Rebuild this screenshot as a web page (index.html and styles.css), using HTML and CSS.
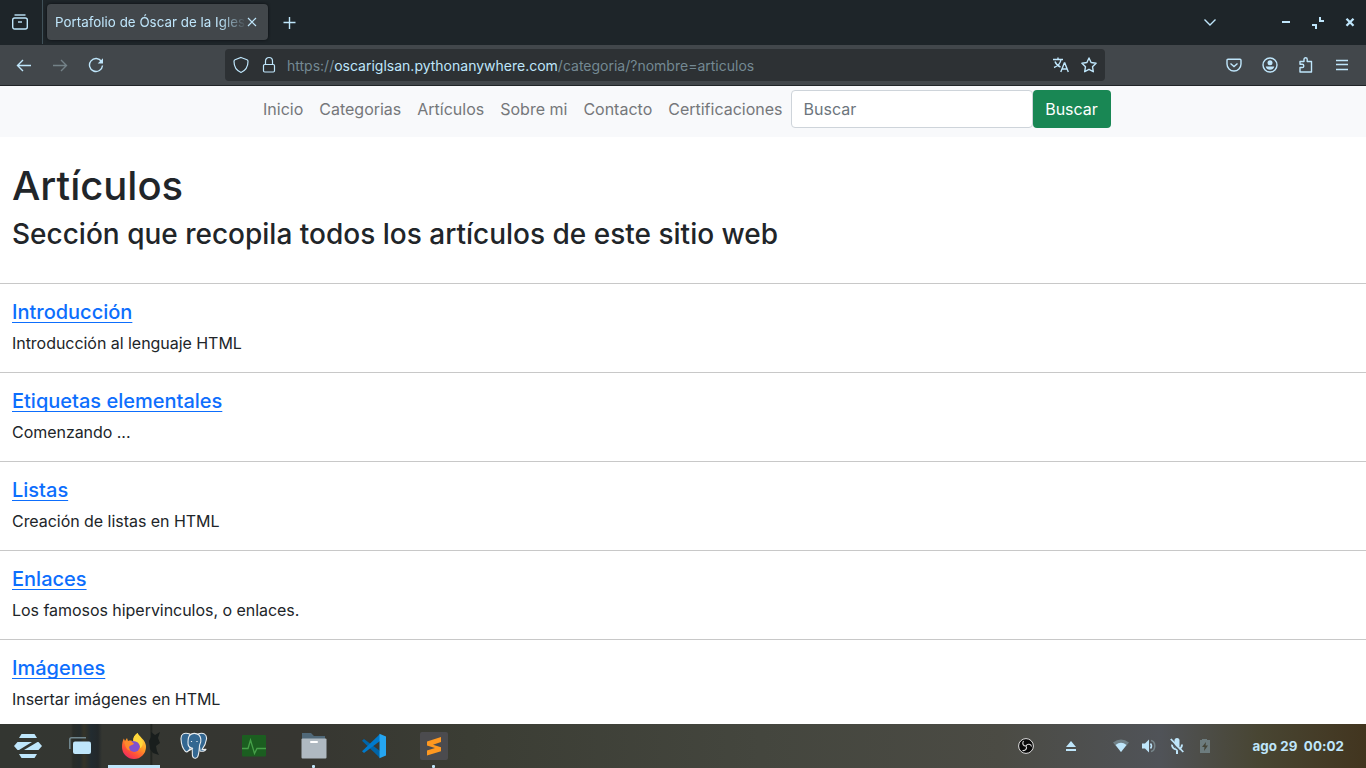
FILE: index.html
```html
<!DOCTYPE html>
<html lang="es">
<head>
<meta charset="utf-8">
<title>Portafolio de Óscar de la Iglesia</title>
<link rel="stylesheet" href="styles.css">
</head>
<body>
<div class="desktop">
  <header class="tabbar">
    <div class="library"><svg width="18" height="18" viewBox="0 0 18 18" class="line"><path d="M3.500 2h11"/><rect x="1.700" y="5" width="14.600" height="11" rx="2"/><path d="M7 9h4"/></svg></div>
    <div class="tab"><span class="tab-title">Portafolio de Óscar de la Igles</span><svg width="10" height="10" viewBox="0 0 10 10" class="line thin"><path d="M1 1l8 8M9 1l-8 8"/></svg></div>
    <svg class="line new-tab" width="14" height="14" viewBox="0 0 14 14"><path d="M7.500 1v12M1.500 6.500h12"/></svg>
    <div class="window-controls">
      <svg class="line" width="14" height="14" viewBox="0 0 14 14"><path d="M1.500 3.500L7 9l5.500-5.500"/></svg>
      <svg class="fill" width="10" height="10" viewBox="0 0 10 10"><path d="M1 3h8v2H1z"/></svg>
      <svg class="fill" width="12" height="12" viewBox="0 0 12 12"><path d="M7 0h2v3h3v2H7zM0 7h5v5H3V9H0z"/></svg>
      <svg class="line heavy" width="10" height="10" viewBox="0 0 10 10"><path d="M1.500 .8l7 7M8.500 .8l-7 7"/></svg>
    </div>
  </header>

  <div class="toolbar">
    <div class="history">
      <svg class="line" width="16" height="16" viewBox="0 0 16 16"><path d="M15 8.500H1.500M7 3L1.500 8.500 7 14"/></svg>
      <svg class="line dim" width="16" height="16" viewBox="0 0 16 16"><path d="M1 8.500h13.500M9 3l5.500 5.500L9 14"/></svg>
      <svg class="line" width="16" height="16" viewBox="0 0 16 16"><path d="M13.500 4.500A6.500 6.500 0 1 0 14.500 8.500"/><path class="fill" stroke="none" d="M15 1.200v5.300H9.700z"/></svg>
    </div>
    <div class="urlbar">
      <svg class="line thin" width="16" height="18" viewBox="0 0 16 18"><path d="M8 1.500l6 2.200c1 .4 1 1 1 1.800 0 5-2.500 9-7 11-4.500-2-7-6-7-11 0-.8 0-1.400 1-1.800z"/></svg>
      <svg class="line thin lock" width="14" height="18" viewBox="0 0 14 18"><path d="M3.500 8V5a3.500 3.500 0 0 1 7 0v3"/><rect x="1.500" y="8.500" width="11" height="7.500" rx="1.200"/></svg>
      <span class="url">https://<b>oscariglsan.pythonanywhere.com</b>/categoria/?nombre=articulos</span>
      <svg class="line translate" width="16" height="16" viewBox="0 0 16 16"><path d="M0 2.500h10M5 .5v2M1 10.500C5 9 7.500 6 8 2.500M2 4.500c1 3 3 4.500 5.500 5.500M7.800 15l3.500-9h.5l3.500 9M9.200 12h4.600"/></svg>
      <svg class="line star" width="16" height="16" viewBox="0 0 16 16"><path stroke-linejoin="round" d="M8 1l2.100 4.500 5 .7-3.600 3.500.8 5L8 12.300l-4.300 2.400.8-5L.9 6.200l5-.7z"/></svg>
    </div>
    <div class="tools">
      <svg class="line" width="16" height="16" viewBox="0 0 16 16"><path d="M2 2.200h12q1 0 1 1V7a7 7 0 0 1-14 0V3.200q0-1 1-1z"/><path d="M4.500 6.500L8 9.500l3.500-3"/></svg>
      <svg class="line" width="16" height="16" viewBox="0 0 16 16"><circle cx="8" cy="8" r="7"/><circle class="fill" cx="8" cy="5.800" r="2.500" stroke="none"/><path class="fill" stroke="none" d="M3.700 9.500h8.600a4.500 4.500 0 0 1-8.600 0z"/></svg>
      <svg class="line" width="16" height="16" viewBox="0 0 16 16"><path stroke-linejoin="round" d="M2 15v-4.500h2.200a1.600 1.600 0 0 0 0-3.200H2V4.500h4V2.300a1.600 1.600 0 0 1 3.200 0v2.200H13.500V15z"/></svg>
      <svg class="line" width="14" height="14" viewBox="0 0 14 14"><path d="M1 2.500h12M1 6.500h12M1 11.500h12"/></svg>
    </div>
  </div>

  <main class="page">
    <nav class="navbar">
      <a>Inicio</a><a>Categorias</a><a>Artículos</a><a>Sobre mi</a><a>Contacto</a><a>Certificaciones</a>
      <form class="search"><input class="search-input" placeholder="Buscar"><button class="search-button" type="button">Buscar</button></form>
    </nav>
    <section class="intro"><h1>Artículos</h1><h2>Sección que recopila todos los artículos de este sitio web</h2></section>
    <article class="entry"><h3><a href="#">Introducción</a></h3><p>Introducción al lenguaje HTML</p></article>
    <article class="entry"><h3><a href="#">Etiquetas elementales</a></h3><p>Comenzando ...</p></article>
    <article class="entry"><h3><a href="#">Listas</a></h3><p>Creación de listas en HTML</p></article>
    <article class="entry"><h3><a href="#">Enlaces</a></h3><p>Los famosos hipervinculos, o enlaces.</p></article>
    <article class="entry"><h3><a href="#">Imágenes</a></h3><p>Insertar imágenes en HTML</p></article>
  </main>

  <footer class="taskbar">
    <div class="silhouette"><svg width="12" height="30" viewBox="0 0 12 30"><path fill="#191e1d" d="M2 3l4 3 5-3-2 6 2 5-4 3 1 5 2 4-6-2-3-4-1-8 2-4z"/></svg></div>
    <div class="apps">
      <div class="app"><svg class="fill" width="28" height="24" viewBox="0 0 28 24"><path d="M7.500 0h13L23 4H5zM5 20h18l-2.500 4h-13zM3.500 8H18L5 16H3.500L0 12zM23.500 8h1l3.500 4-3.500 4H10z"/></svg></div>
      <div class="app"><svg width="22" height="18" viewBox="0 0 22 18"><path d="M.8 12V2.500q0-1.700 1.700-1.700H17" fill="none" stroke="#70868e" stroke-width="1.600"/><rect x="4" y="4.500" width="18" height="12.500" rx="2" fill="#bfe6fb"/></svg></div>
      <div class="app active"><svg width="26" height="26" viewBox="0 0 26 26"><defs><linearGradient id="fx" x1=".85" y1="0" x2=".25" y2="1"><stop offset="0" stop-color="#ffe84a"/><stop offset=".45" stop-color="#ff9a24"/><stop offset=".75" stop-color="#ff5038"/><stop offset="1" stop-color="#ed2767"/></linearGradient></defs><path fill="url(#fx)" d="M16.500 0c1 2 3 3.500 4.500 5.500L22.500 7c2 3 2.500 5 2.500 7a12 12 0 1 1-24 0c0-3 .5-6 1.800-8.500L4 8l2-3 1 3c1.500-.7 4-.6 5 .3 0-4 1.500-6 4.500-8.300z"/><circle cx="13.300" cy="13.300" r="5.600" fill="#8051cf"/><path fill="#ff8a2c" d="M3.500 9c3-2 7-.8 9.500 1.500-1 1.700-3 1.700-4.300 2.500-1 1-.8 3 .5 4.500-3 0-5-3-5.700-8.500z"/><path fill="#ffd83b" d="M16.500 0c-3.500 2.500-4.500 5-4 8.300 4 0 7 2.700 6.500 7 2-1 3.500-4 2.500-7.500C20 4 17.500 3 16.500 0z"/></svg></div>
      <div class="app"><svg width="28" height="28" viewBox="0 0 28 28"><g fill="#336791" stroke="#e8edf0" stroke-width="1.100" stroke-linejoin="round"><path d="M10 2C4 0 .8 2 1 7c.2 4 2 10 4.500 12.500C8 21 8 18 10 17.500z"/><path d="M18 2c5-2 9 0 8.500 5-.5 4-2.500 8-4.500 10.500l4-.3c-1 2-4 2.500-6 1.700z"/><path d="M10 3c2-2 6-2.400 9 0 2 2 2.500 6 1 9-1 2-.5 6-1.500 10-.6 5-5 5.500-6 2-.5-3 .3-6-.7-8-3-.5-4-3-3.800-6C8 7 8 5 10 3z"/></g><path d="M11.500 9v1M17 9v1M13 16c-2 1-3 3-5 2.500" stroke="#e8edf0" stroke-width="1.200" fill="none"/></svg></div>
      <div class="app"><svg width="24" height="22" viewBox="0 0 24 22"><rect width="24" height="21.500" rx="1" fill="#1b5e20"/><path d="M0 13.500h6L8.500 5l4 13.500 2.500-5H24" fill="none" stroke="#46a049" stroke-width="1.300"/></svg></div>
      <div class="app running"><svg width="26" height="26" viewBox="0 0 26 26"><path d="M1 0h9l3 3h11v6H1z" fill="#506878"/><rect x=".5" y="5.500" width="25" height="20" rx="1" fill="#afb9c1"/><rect x="9" y="8" width="8" height="2" rx="1" fill="#fff"/></svg></div>
      <div class="app"><svg width="26" height="26" viewBox="0 0 26 26"><path fill="#0065a9" d="M1 7.800L3 6l16 12v7z"/><path fill="#007acc" d="M1 18.200L3 20 19 8V1z"/><path fill="#25a5f1" d="M18.500.7L25 3.500v19l-6.500 2.800z"/></svg></div>
      <div class="app running"><svg width="28" height="28" viewBox="0 0 28 28"><rect width="28" height="28" rx="2" fill="#4b4b4e"/><path fill="#ff9820" d="M7 9.500L21 5v5l-8 2.700 8 2.500v4L7 23.500v-5l8-2.500-8-2.500z"/></svg></div>
    </div>
    <div class="tray">
      <svg width="16" height="16" viewBox="0 0 16 16"><circle cx="8" cy="8" r="7.400" fill="#080808" stroke="#e0e0e0"/><path d="M8 8C5 8 4 5.500 5.500 3M8 8c1.500-2.800 5-2 5.500.5M8 8c1.500 2.500-.5 5-3.500 4.500" stroke="#ddd" stroke-width="1.100" fill="none"/></svg>
      <svg class="fill" width="10" height="10" viewBox="0 0 10 10"><path d="M5 0l5 6H0zM0 8h10v2H0z"/></svg>
      <svg width="16" height="14" viewBox="0 0 16 14"><path d="M0 3.500q8-6 16 0L8 13z" fill="#708087"/><path d="M2.500 6q5.500-4.500 11 0L8 13z" fill="#bfe6fb"/></svg>
      <svg width="16" height="14" viewBox="0 0 16 14"><path d="M1 4.500h3L8 .5v13l-4-4H1z" fill="#bfe6fb"/><path d="M9.500 4.500q2 2.500 0 5" stroke="#bfe6fb" stroke-width="1.500" fill="none"/><path d="M10 1.500c5 1 5 10 0 11" stroke="#77868b" stroke-width="1.500" fill="none"/></svg>
      <svg width="14" height="16" viewBox="0 0 14 16"><rect x="4.500" y="0" width="5" height="10" rx="2.500" fill="#bfe6fb"/><path d="M2 6.500c0 6.500 10 6.500 10 0M7 11v5" stroke="#bfe6fb" stroke-width="2" fill="none"/><path d="M0 2.800l12 12.500" stroke="#4d5255" stroke-width="1.500"/><path d="M.8 1l12.500 13" stroke="#bfe6fb" stroke-width="1.800"/></svg>
      <svg width="12" height="14" viewBox="0 0 12 14"><path fill="#6d7c7e" d="M3 0h5v1h3v13H1V1h2z"/><path d="M7 3L3 8h2.500L5 12l4-5.500H6.500z" fill="#444538"/></svg>
      <span class="clock">ago 29&nbsp; 00:02</span>
    </div>
  </footer>
</div>
</body>
</html>
```
FILE: styles.css
```css
* { box-sizing: border-box; }
body { margin: 0; font-family: Inter, sans-serif; color: #212529; background: #fff; overflow: hidden; }
.desktop { width: 1366px; height: 768px; display: flex; flex-direction: column; }
svg { display: block; flex: none; }
.line { fill: none; stroke: #bfe6fb; stroke-width: 1.4; }
.thin { stroke-width: 1.2; }
.heavy { stroke-width: 2.3; }
.fill { fill: #bfe6fb; }
.dim { stroke: #748288; }

.tabbar { height: 45px; flex: none; background: #1e2529; display: flex; align-items: center; }
.library { width: 43px; height: 44px; align-self: flex-start; border-right: 1px solid #405159; padding: 13px 0 0 11px; }
.tab { width: 221px; height: 36px; margin: -1px 0 0 4px; border-radius: 4px; background: #42474b; box-shadow: 0 0 3px #0b0e10; display: flex; align-items: center; padding: 0 11px 0 8px; gap: 2px; }
.tab-title { width: 190px; font-size: 13.33px; letter-spacing: 0.03px; line-height: 20px; color: #bfe6fb; white-space: nowrap; -webkit-mask-image: linear-gradient(to right, #000 165px, transparent 191px); mask-image: linear-gradient(to right, #000 165px, transparent 191px); }
.new-tab { margin-left: 14px; }
.window-controls { margin-left: auto; display: grid; grid-template-columns: 14px 10px 12px 10px; column-gap: 21px; align-items: center; margin-right: 11px; }
.window-controls svg:first-child { margin-left: -43px; }

.toolbar { height: 41px; flex: none; background: #42474b; border-bottom: 1px solid #202427; display: flex; align-items: center; }
.history { width: 225px; padding-left: 16px; display: flex; gap: 20px; }
.urlbar { width: 880px; height: 32px; background: #2d3134; border-radius: 4px; display: flex; align-items: center; padding: 0 8px; }
.lock { margin-left: 13px; }
.url { margin-left: 11px; padding-top: 2px; flex: 1; font-size: 14px; line-height: 22px; color: #748993; white-space: nowrap; }
.url b { color: #bfe6fb; font-weight: 400; }
.translate { margin-right: 12px; }
.tools { margin-left: auto; display: flex; align-items: center; gap: 20px; padding-right: 17px; }
.tools svg:nth-child(3) { margin-right: 1px; }

.page { height: 638px; flex: none; overflow: hidden; }
.navbar { height: 51px; background: #f8f9fb; display: flex; align-items: center; padding: 0 0 5px 263px; gap: 16px; font-size: 16px; color: #75777a; }
.search { display: flex; margin-left: -8px; }
.search-input { width: 242px; height: 38px; border: 1px solid #ced4da; border-radius: 4px; padding: 6px 12px; font: 16px/24px Inter, sans-serif; background: #fff; }
.search-input::placeholder { color: #6c757d; opacity: 1; }
.search-button { width: 78px; height: 38px; border: 0; border-radius: 4px; padding: 0; background: #198754; color: #fff; font: 16px/24px Inter, sans-serif; }
.intro { height: 146px; padding: 25px 12px 0; }
h1 { margin: 0 0 8px; font-size: 40px; line-height: 48px; font-weight: 500; }
h2 { margin: 0; font-size: 28px; line-height: 33.6px; font-weight: 500; }
.entry { height: 89px; border-top: 1px solid #c8c8c8; padding: 16px 12px 0; }
h3 { margin: 0 0 7px; font-size: 20px; line-height: 24px; font-weight: 500; }
h3 a { color: #0d6efd; text-decoration: underline; text-decoration-thickness: 1px; text-underline-offset: 3px; text-decoration-skip-ink: none; }
.entry p { margin: 0; font-size: 16px; line-height: 24px; letter-spacing: -0.04px; }

.taskbar { height: 44px; flex: none; position: relative; display: flex; justify-content: space-between; background: linear-gradient(90deg, transparent 71px, #292d29 73px, #252c2d 80px, #353428 84px, #222b30 91px, #23282a 98px, transparent 102px, transparent 150px, #1d211d 151px, transparent 153px), linear-gradient(90deg, #333631 0, #363631 300px, #3b3d34 470px, #44463e 760px, #4b4b44 1000px, #505358 1160px, #484532 1260px, #42351f 1366px); }
.apps { display: flex; gap: 8px; padding-left: 2px; }
.app { width: 52px; display: grid; place-items: center; position: relative; }
.app:nth-child(2) { margin-left: -8px; }
.active { border-bottom: 3px solid #bfe6fb; padding-top: 2px; margin-left: -6px; }
.running::after { content: ""; position: absolute; bottom: 0; left: 24px; width: 3px; height: 3px; border-radius: 1px; background: #bfe6fb; }
.silhouette { position: absolute; left: 149px; top: 5px; }
.tray { display: flex; align-items: center; padding-right: 22px; }
.tray svg:nth-child(2) { margin-left: 32px; }
.tray svg:nth-child(3) { margin-left: 37px; }
.tray svg:nth-child(4) { margin-left: 12px; }
.tray svg:nth-child(5) { margin-left: 13px; }
.tray svg:nth-child(6) { margin-left: 15px; }
.clock { margin-left: 41px; font-size: 13.33px; letter-spacing: 0.07px; font-weight: 700; color: #bfe6fb; white-space: nowrap; }
```
